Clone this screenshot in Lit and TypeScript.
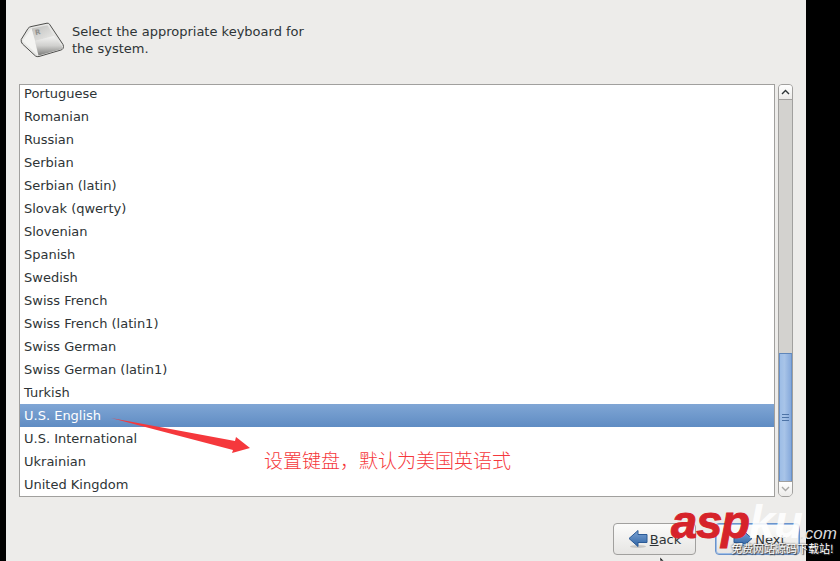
import { LitElement, html, css, svg } from "lit";
import { customElement } from "lit/decorators.js";

const ROWS = ["Portuguese","Romanian","Russian","Serbian","Serbian (latin)","Slovak (qwerty)","Slovenian","Spanish","Swedish","Swiss French","Swiss French (latin1)","Swiss German","Swiss German (latin1)","Turkish","U.S. English","U.S. International","Ukrainian","United Kingdom"];

const keycap = svg`<svg class="key" width="46" height="38" viewBox="0 0 46 38">
  <defs>
    <linearGradient id="kt" x1="0" y1="0" x2="1" y2="1"><stop offset="0" stop-color="#bdbdbb"/><stop offset="1" stop-color="#ececea"/></linearGradient>
    <linearGradient id="kf" x1="0" y1="0" x2="0" y2="1"><stop offset="0" stop-color="#f4f4f3"/><stop offset=".5" stop-color="#d0d0ce"/><stop offset="1" stop-color="#7d7d7b"/></linearGradient>
  </defs>
  <path d="M1.2 17.5 L8 6.5 Q9 5 11 4.6 L27 1.2 Q28.5 1 29.5 2.2 L43 22.5 Q44 24.5 43 26.5 Q42.5 27.5 41 28 L19 34.5 Q17 35 15.5 34 L2.5 22 Q0.8 20 1.2 17.5Z" fill="#e6e6e4" stroke="#4e4e4c" stroke-width="1"/>
  <path d="M11.5 6.5 L27.5 3.2 L34 14 L15 19Z" fill="url(#kt)"/>
  <path d="M2.5 19 L11.5 6.5 L15 19 L18 33 Z" fill="#f4f4f2"/>
  <path d="M15 19 L34 14 L42.5 25 L42 27 L18.5 33.5Z" fill="url(#kf)"/>
  <text x="15" y="12.5" font-family="DejaVu Sans, sans-serif" font-size="7" font-weight="bold" fill="#8f8f8d" transform="rotate(-10 18 10)">R</text>
</svg>`;

const arrow = (dir: "l" | "r") => svg`<svg class="arrow" width="20" height="20" viewBox="0 0 20 20">
  <defs><linearGradient id="ar${dir}" x1="0" y1="0" x2="0" y2="1"><stop offset="0" stop-color="#7ba3d4"/><stop offset="1" stop-color="#2f64a4"/></linearGradient></defs>
  <ellipse cx="10" cy="17.5" rx="8" ry="1.5" fill="#c8c7c5"/>
  <path transform="${dir === "r" ? "translate(20 0) scale(-1 1)" : ""}" d="M1 9.5 L10 1.5 V5.5 H19 V13.5 H10 V17.5Z" fill="url(#ar${dir})" stroke="#2b5a96" stroke-width="1"/>
</svg>`;

@customElement("app-root")
export class AppRoot extends LitElement {
  static styles = css`
    :host { display: block; width: 840px; height: 561px; position: relative; overflow: hidden; background: #000; font-family: "DejaVu Sans", sans-serif; font-size: 13px; color: #2e3436; }
    .page { margin-left: 6px; width: 800px; height: 561px; background: #edecea; box-sizing: border-box; padding: 20px 13px 0 13px; display: flex; flex-direction: column; }
    .head { display: flex; gap: 6px; height: 64px; align-items: flex-start; }
    .key { margin-top: 2px; margin-left: 1px; flex: none; }
    .title { width: 250px; line-height: 17px; margin-top: 3px; }
    .body { display: flex; gap: 3px; height: 413px; }
    .list { width: 757px; box-sizing: border-box; border: 1px solid #a1a09e; background: #fff; overflow: hidden; }
    .rows { margin-top: -3px; }
    .row { height: 23px; line-height: 24px; padding-left: 4px; white-space: nowrap; }
    .row.sel { background: linear-gradient(#80a6d5, #5f8cc3); color: #fff; }
    .sb { width: 15px; box-sizing: border-box; border: 1px solid #a1a09e; border-radius: 4px 4px 5px 5px; background: #d3d2cf; display: flex; flex-direction: column; overflow: hidden; }
    .sb-btn { height: 14px; flex: none; background: linear-gradient(#fff, #ecebe9); display: flex; align-items: center; justify-content: center; border-bottom: 1px solid #a1a09e; }
    .sb-btn.down { border-bottom: 0; border-top: 1px solid #a1a09e; height: 14px; }
    .trough { flex: 1; display: flex; flex-direction: column; justify-content: flex-end; }
    .thumb { height: 128px; box-sizing: border-box; background: linear-gradient(90deg, #9dbde6, #a8c4e8 40%, #86a9db); border-top: 1px solid #5f86ba; border-left: 1px solid #6a93cb; border-right: 1px solid #6a93cb; display: flex; flex-direction: column; align-items: center; justify-content: center; gap: 2px; }
    .thumb i { display: block; width: 7px; height: 1px; background: #4d73a6; }
    .foot { display: flex; gap: 19px; padding: 26px 0 0 594px; }
    .btn { width: 83px; height: 32px; box-sizing: border-box; border: 1px solid #a1a09e; border-radius: 4px; background: linear-gradient(#fbfbfa, #e6e5e3); display: flex; align-items: center; justify-content: center; gap: 2px; flex: none; }
    .btn.next { width: 85px; padding-left: 4px; border-color: #6a93cb; box-shadow: inset 0 0 0 1px #9dbde6; }
    .btn u { text-decoration-thickness: 1px; }
    .note { position: absolute; left: 264px; top: 449px; font: 300 19px/22px "Noto Sans CJK SC", sans-serif; color: #f5383c; white-space: nowrap; }
    .pointer { position: absolute; left: 0; top: 0; pointer-events: none; }
    .wm { position: absolute; left: 670px; top: 504px; width: 170px; height: 57px; pointer-events: none; }
    .asp { position: absolute; left: 1px; top: -8px; font: italic bold 47px/52px "Liberation Sans", sans-serif; letter-spacing: -1px; color: #d6232a; -webkit-text-stroke: 1px #d6232a; }
    .ku { position: absolute; left: 79px; top: -8px; font: italic bold 47px/52px "Liberation Sans", sans-serif; letter-spacing: -1px; color: rgba(255, 255, 255, 0.88); }
    .com { position: absolute; left: 130px; top: 20px; font: italic 17px/20px "Liberation Sans", sans-serif; color: #d8d8d8; }
    .cn { position: absolute; left: 61px; top: 36px; font: 11px/16px "Noto Sans CJK SC", sans-serif; color: #fff; white-space: nowrap; text-shadow: 0 0 2px #333, 1px 1px 1px #333; }
    .cursor { position: absolute; left: 659px; top: 557px; }
  `;

  render() {
    return html`
      <div class="page">
        <div class="head">${keycap}<div class="title">Select the appropriate keyboard for the system.</div></div>
        <div class="body">
          <div class="list"><div class="rows">
            ${ROWS.map((r) => html`<div class="row ${r === "U.S. English" ? "sel" : ""}">${r}</div>`)}
          </div></div>
          <div class="sb">
            <div class="sb-btn"><svg width="9" height="6" viewBox="0 0 9 6"><path d="M1 5 L4.5 1.5 L8 5" fill="none" stroke="#2e3436" stroke-width="1.4"/></svg></div>
            <div class="trough"><div class="thumb"><i></i><i></i><i></i></div></div>
            <div class="sb-btn down"><svg width="9" height="6" viewBox="0 0 9 6"><path d="M1 1 L4.5 4.5 L8 1" fill="none" stroke="#a8a8a6" stroke-width="1.4"/></svg></div>
          </div>
        </div>
        <div class="foot">
          <div class="btn">${arrow("l")}<span><u>B</u>ack</span></div>
          <div class="btn next">${arrow("r")}<span><u>N</u>ext</span></div>
        </div>
      </div>
      <svg class="pointer" width="840" height="561"><path d="M111 418 L235 441 L236 437 L250 448 L232 453 L233 450 Z" fill="#f5383c"/></svg>
      <div class="note">设置键盘，默认为美国英语式</div>
      <div class="wm">
        <span class="asp">asp</span><span class="ku">ku</span><span class="com">.com</span>
        <span class="cn">免费网站源码下载站!</span>
      </div>
      <svg class="cursor" width="8" height="4"><path d="M1 0 V4 L5 4Z" fill="#222" stroke="#fff" stroke-width=".5"/></svg>
    `;
  }
}
